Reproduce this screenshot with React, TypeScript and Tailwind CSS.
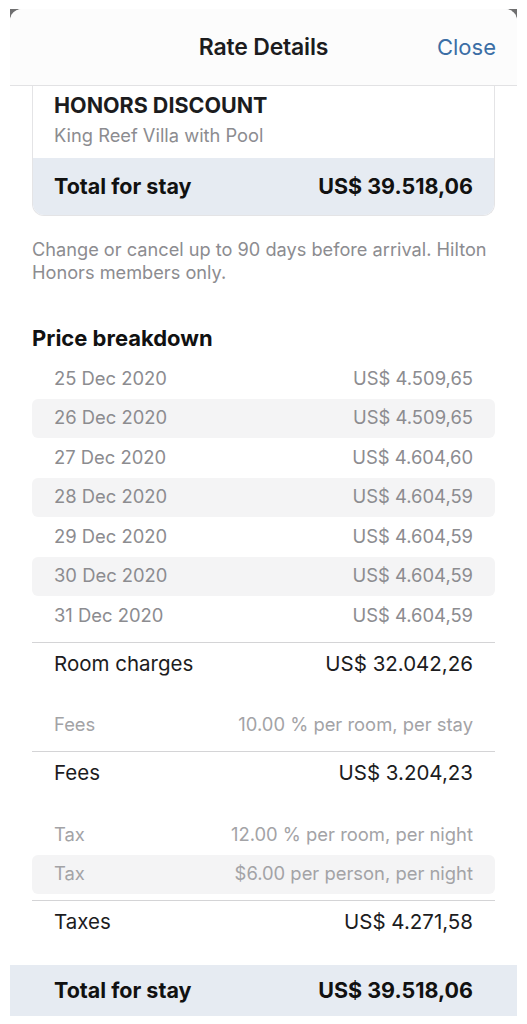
import React from "react";

const nights = [
  ["25 Dec 2020", "US$ 4.509,65"],
  ["26 Dec 2020", "US$ 4.509,65"],
  ["27 Dec 2020", "US$ 4.604,60"],
  ["28 Dec 2020", "US$ 4.604,59"],
  ["29 Dec 2020", "US$ 4.604,59"],
  ["30 Dec 2020", "US$ 4.604,59"],
  ["31 Dec 2020", "US$ 4.604,59"],
];

function DetailRow({ left, right, shaded, light }: { left: string; right: string; shaded?: boolean; light?: boolean }) {
  return (
    <div
      className={`flex h-[39.5px] items-center justify-between rounded-[6px] px-[22px] text-[18.4px] ${
        shaded ? "bg-[#f4f4f5]" : ""
      } ${light ? "text-[#a3a3a6]" : "text-[#8c8c90]"}`}
    >
      <span>{left}</span>
      <span>{right}</span>
    </div>
  );
}

function SummaryRow({ left, right }: { left: string; right: string }) {
  return (
    <div className="border-t-[1.5px] border-[#d4d4d6]">
      <div className="flex h-[43px] items-center justify-between px-[22px] text-[20.5px] text-[#1c1c1e]">
        <span>{left}</span>
        <span>{right}</span>
      </div>
    </div>
  );
}

export default function App() {
  return (
    <div className="bg-white px-[10px] pt-[9px] pb-[8px]" style={{ fontFamily: "Inter, 'Noto Sans', sans-serif" }}>
      <div className="h-[1007px] bg-[#6f6f70]">
        <div className="flex h-full flex-col overflow-hidden rounded-t-[12px] bg-white">
          {/* Header */}
          <div className="relative flex h-[77px] shrink-0 items-center justify-center border-b border-[#e2e2e4] bg-[#fcfcfc]">
            <span className="text-[23px] font-semibold tracking-[-0.2px] text-[#1c1c1e]">Rate Details</span>
            <span className="absolute right-[21px] top-1/2 -translate-y-1/2 text-[22px] text-[#3b6ea5]">Close</span>
          </div>

          <div className="flex flex-1 flex-col">
            <div className="px-[22px]">
              {/* Card */}
              <div className="overflow-hidden rounded-b-[12px] border-x border-b border-[#e4e4e6]">
                <div className="px-[21px] pt-[7px] pb-[12px]">
                  <div className="text-[21.5px] font-bold leading-[24px] text-[#1c1c1e]">HONORS DISCOUNT</div>
                  <div className="mt-[7px] text-[18.3px] leading-[22px] text-[#8c8c90]">King Reef Villa with Pool</div>
                </div>
                <div className="flex h-[57px] items-center justify-between bg-[#e6ebf2] px-[21px] text-[21.5px] font-bold text-[#111]">
                  <span>Total for stay</span>
                  <span>US$ 39.518,06</span>
                </div>
              </div>

              <p className="mt-[22px] text-[18.2px] leading-[23px] text-[#8c8c90]">
                Change or cancel up to 90 days before arrival. Hilton Honors members only.
              </p>

              <h2 className="mt-[41px] text-[22px] font-bold leading-[26px] text-[#111]">Price breakdown</h2>

              <div className="mt-[8px]">
                {nights.map(([d, p], i) => (
                  <DetailRow key={d} left={d} right={p} shaded={i % 2 === 1} />
                ))}
              </div>

              <div className="mt-[6px]">
                <SummaryRow left="Room charges" right="US$ 32.042,26" />
              </div>

              <div className="mt-[20px]">
                <DetailRow left="Fees" right="10.00 % per room, per stay" light />
              </div>
              <div className="mt-[6px]">
                <SummaryRow left="Fees" right="US$ 3.204,23" />
              </div>

              <div className="mt-[20px]">
                <DetailRow left="Tax" right="12.00 % per room, per night" light />
                <DetailRow left="Tax" right="$6.00 per person, per night" light shaded />
              </div>
              <div className="mt-[6px]">
                <SummaryRow left="Taxes" right="US$ 4.271,58" />
              </div>
            </div>

            <div className="mt-auto flex h-[51px] items-center justify-between bg-[#e6ebf2] px-[44px] text-[21.5px] font-bold text-[#111]">
              <span>Total for stay</span>
              <span>US$ 39.518,06</span>
            </div>
          </div>
        </div>
      </div>
    </div>
  );
}
